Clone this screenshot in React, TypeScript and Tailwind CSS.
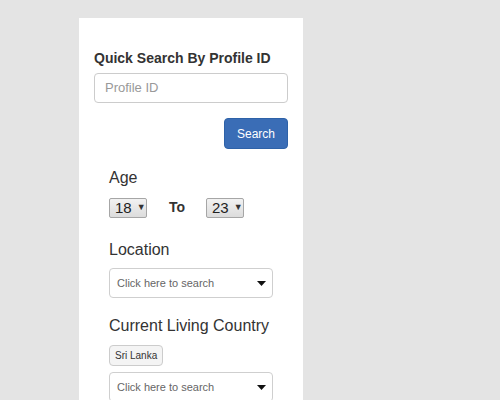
import React from "react";

function Caret() {
  return (
    <svg width="9" height="5" viewBox="0 0 9 5" className="shrink-0">
      <path d="M0 0 L9 0 L4.5 5 Z" fill="#111" />
    </svg>
  );
}

function MiniSelect({ value }: { value: string }) {
  return (
    <div className="flex h-[20px] w-[38px] items-center gap-[5px] rounded-[2px] border border-[#a6a6a6] bg-gradient-to-b from-[#f2f2f2] to-[#dcdcdc] pl-[5px] text-[15px] leading-none text-[#222]">
      <span>{value}</span>
      <span className="text-[9px] text-[#333]">▼</span>
    </div>
  );
}

function SearchDrop() {
  return (
    <div className="flex h-[30px] w-[164px] items-center justify-between rounded-[4px] border border-[#cfcfcf] bg-white pl-[7px] pr-[6px] text-[11px] text-[#666]">
      <span>Click here to search</span>
      <Caret />
    </div>
  );
}

export default function App() {
  return (
    <div
      className="h-[400px] w-[500px] overflow-hidden bg-[#e4e4e4] pl-[79px] pt-[18px]"
      style={{ fontFamily: '"Liberation Sans", Arial, sans-serif' }}
    >
      <div className="flex h-[400px] w-[224px] flex-col bg-white px-[15px] pt-[30px] text-[#333]">
        <div className="text-[14px] font-bold leading-[21px]">Quick Search By Profile ID</div>
        <div className="mt-[4px] flex h-[30px] items-center rounded-[4px] border border-[#cccccc] pl-[10px] text-[13px] text-[#999]">
          Profile ID
        </div>
        <div className="mt-[15px] flex justify-end">
          <div className="flex h-[31px] w-[64px] items-center justify-center rounded-[4px] border border-[#2e62a8] bg-[#3a6db6] text-[12px] text-white">
            Search
          </div>
        </div>
        <div className="flex flex-col px-[15px]">
          <div className="mt-[18px] text-[16px] leading-[22px]">Age</div>
          <div className="mt-[8px] flex items-center">
            <MiniSelect value="18" />
            <span className="ml-[22px] w-[37px] text-[14px] font-bold">To</span>
            <MiniSelect value="23" />
          </div>
          <div className="mt-[21px] text-[16px] leading-[22px]">Location</div>
          <div className="mt-[7px]">
            <SearchDrop />
          </div>
          <div className="mt-[17px] text-[16px] leading-[22px]">Current Living Country</div>
          <div className="mt-[8px] flex">
            <div className="flex h-[21px] items-center rounded-[4px] border border-[#cccccc] bg-[#f4f4f4] px-[5px] text-[10px] text-[#333]">
              Sri Lanka
            </div>
          </div>
          <div className="mt-[6px]">
            <SearchDrop />
          </div>
        </div>
      </div>
    </div>
  );
}
